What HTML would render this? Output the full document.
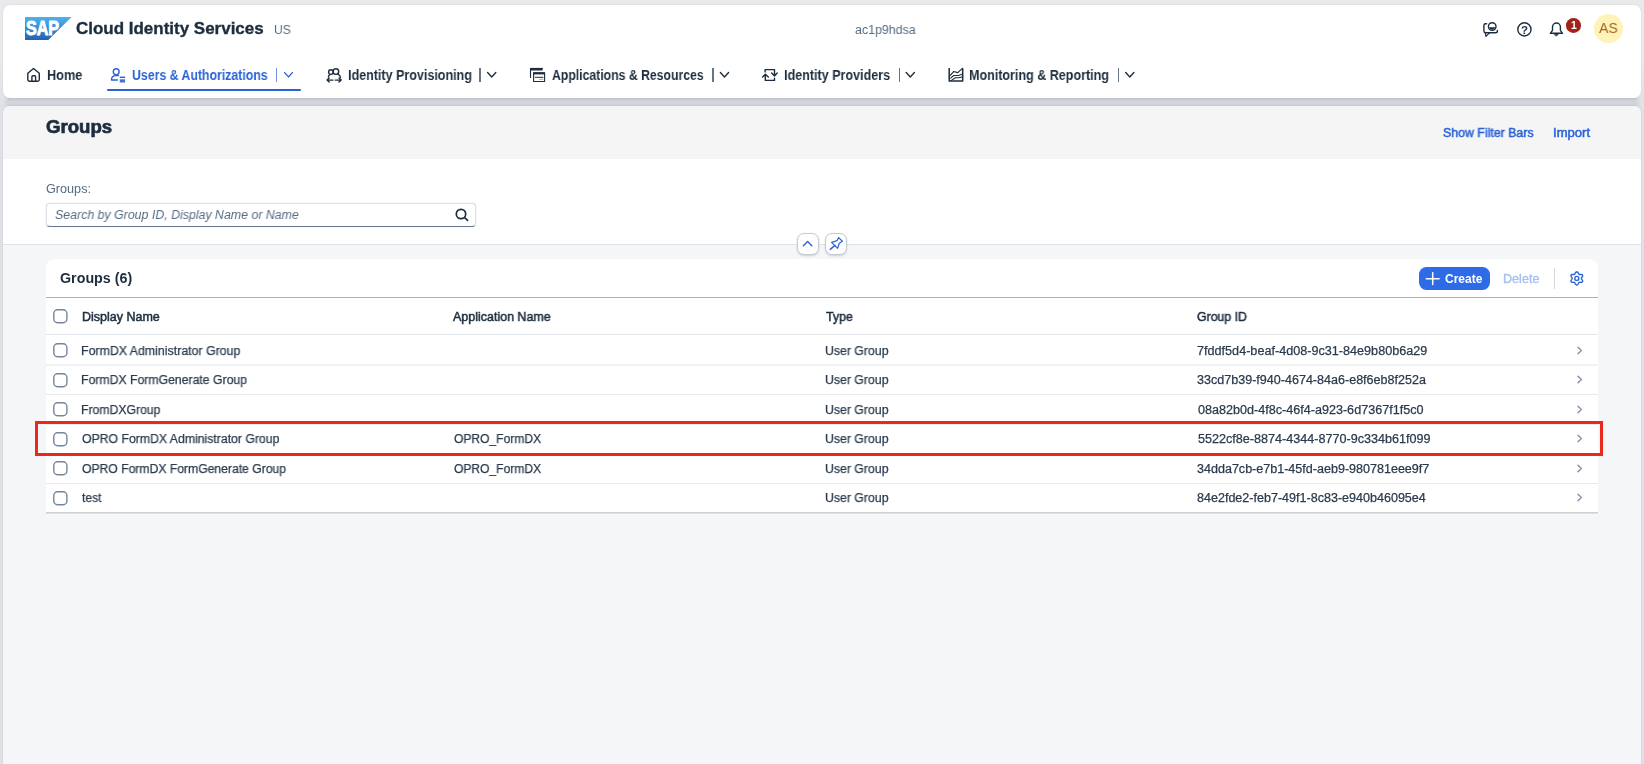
<!DOCTYPE html>
<html lang="en">
<head>
<meta charset="utf-8">
<title>Groups - Cloud Identity Services</title>
<style>
*{box-sizing:border-box;margin:0;padding:0}
html,body{width:1644px;height:764px;overflow:hidden}
body{background:linear-gradient(#e9eaec 0,#e9eaec 60px,#dfe1e5 110px,#dfe1e5 100%);font-family:"Liberation Sans",Arial,sans-serif;position:relative;color:#1d2d3e}
.t{position:absolute;white-space:nowrap;line-height:20px;height:20px;display:block;will-change:transform;transform-origin:0 50%}
svg{position:absolute;overflow:visible}
.ic{fill:none;stroke:#1d2d3e;stroke-width:1.4;stroke-linecap:round;stroke-linejoin:round}
.bl{stroke:#2b63d6}
/* shell */
#shell{position:absolute;left:3px;top:5px;width:1638px;height:93px;background:#fff;border-radius:7px;box-shadow:0 0 2px rgba(90,100,115,.2)}
#gap{position:absolute;left:8px;top:97px;width:1628px;height:10px;box-shadow:-3px 0 3px #d3d6db,3px 0 3px #d3d6db;background:linear-gradient(#c6cad1 0,#c8ccd3 25%,#d2d6db 45%,#d2d6db 70%,#cdd1d7 85%,#d6d9de 100%)}
#page{position:absolute;left:3px;top:106px;width:1638px;height:670px;background:#f5f6f7;border-radius:7px 7px 0 0;overflow:hidden;box-shadow:0 0 2px rgba(90,105,125,.18)}
#ptitle-bar{position:absolute;left:0;top:0;width:100%;height:53px;background:#f5f5f5}
#filter{position:absolute;left:0;top:53px;width:100%;height:86px;background:#fff;border-bottom:1px solid #dfe1e4}
#search{position:absolute;left:46px;top:203px;width:430px;height:24px;background:#fff;border:1px solid #dde2e8;border-bottom:1px solid #66788e;border-radius:4px;box-shadow:0 0 1px rgba(85,107,130,.35)}
.hbtn{position:absolute;top:233px;width:22px;height:22px;background:#fff;border:1px solid #c3cad3;border-radius:7px;box-shadow:0 1px 2px rgba(85,107,130,.25)}
#tbl{position:absolute;left:46px;top:259px;width:1552px;height:253px;background:#fff;border-radius:9px 9px 0 0}
#tbl .bline{position:absolute;left:0;top:253px;width:100%;height:3px;background:linear-gradient(#ccd1d8 0,#ccd1d8 33%,#dcdfe4 33%,#dcdfe4 66%,#f9fafa 66%)}
#tbl .tbline{position:absolute;left:0;top:38px;width:100%;height:1.4px;background:#a9b4c0}
#tbl .hline{position:absolute;left:0;top:75px;width:100%;height:1px;background:#e2e5e9}
.row{position:absolute;left:0;width:100%;height:29.5px}
.rl{position:absolute;left:0;width:100%;display:block}
.cb{left:7.1px;top:7px;width:16px;height:16px;fill:#fff;stroke:#75859b;stroke-width:1.4}
.chev{left:1531.3px;top:9.85px;width:6px;height:9px;fill:none;stroke:#7f8fa4;stroke-width:1.35;stroke-linecap:round;stroke-linejoin:round}
#create{position:absolute;left:1418.5px;top:266.8px;width:71px;height:23.5px;background:#2e6be6;border-radius:7.5px}
#tsep{position:absolute;left:1554.2px;top:268px;width:1px;height:21px;background:#d3d8de}
#redbox{position:absolute;left:35px;top:421px;width:1568px;height:35px;border:3.3px solid #e8291c}
#avatar{position:absolute;left:1594.4px;top:14.1px;width:28.6px;height:28.6px;border-radius:50%;background:#fff3ba}
#badge{position:absolute;left:1566.3px;top:18.3px;width:14.7px;height:14.7px;border-radius:50%;background:#a0221a}
#uline{position:absolute;left:107px;top:89px;width:193.7px;height:2px;background:#2b63d6;border-radius:1px}
.nsep{position:absolute;top:68px;width:1.6px;height:14px;background:#697585}
</style>
</head>
<body>
<div id="gap"></div>
<header id="shell"></header>
<!-- logo -->
<svg id="logo" style="left:24.7px;top:17px" width="46.6" height="23" viewBox="0 0 46.6 23">
<defs><linearGradient id="lg" x1="0" y1="0" x2="0" y2="1"><stop offset="0" stop-color="#4bb3ee"/><stop offset="0.35" stop-color="#3d97e0"/><stop offset="1" stop-color="#2460b4"/></linearGradient></defs>
<path d="M0 0H46.6L23.3 23H0Z" fill="url(#lg)"/>
<text x="0.9" y="18" font-family="Liberation Sans, Arial, sans-serif" font-weight="700" font-size="19.6" fill="#fff" stroke="#fff" stroke-width="0.9" textLength="33.2" lengthAdjust="spacingAndGlyphs">SAP</text>
</svg>
<span class="t" id="t-title" style="left:76.37px;top:18.00px;font-size:16.5px;font-weight:700;color:#1d2d3e;transform:scaleX(1.0286);-webkit-text-stroke:0.35px #1d2d3e">Cloud Identity Services</span>
<span class="t" id="t-us" style="left:274.08px;top:20.00px;font-size:12.5px;font-weight:400;color:#556b82;transform:scaleX(0.9672);">US</span>
<span class="t" id="t-tenant" style="left:855.23px;top:20.00px;font-size:12.5px;font-weight:400;color:#556b82;transform:scaleX(0.9910);">ac1p9hdsa</span>
<!-- shell right icons -->
<svg style="left:0;top:0" width="1644" height="60">
<g class="ic">
<path d="M1486.6 23.7H1485.6a1.7 1.7 0 0 0-1.7 1.7V31.1a1.7 1.7 0 0 0 1.7 1.7H1495.6a1.8 1.8 0 0 0 1.8-1.8V30.4"/>
<path d="M1485.2 33L1485.9 36.3L1489.6 32.9" stroke-width="1.2"/>
<circle cx="1492.2" cy="26.5" r="3.8"/>
<path d="M1489 27.2a3.3 3.3 0 0 0 6.4 0z" fill="#1d2d3e" stroke="none"/>
<circle cx="1524.4" cy="29.4" r="6.6"/>
<path d="M1550.3 33.3L1552.5 30.3V27a3.95 3.95 0 0 1 7.9 0V30.3L1562.5 33.3Z"/>
<path d="M1554.3 34.2h4.2l-2.1 1.8z" fill="#1d2d3e" stroke-width="0.6"/>
</g>
</svg>
<span class="t" id="t-q" style="left:1520.9px;top:20px;font-size:11.5px;font-weight:700;color:#1d2d3e">?</span>
<div id="badge"></div>
<div id="avatar"></div>
<span class="t" id="t-as" style="left:1598.96px;top:18.00px;font-size:14.5px;font-weight:400;color:#a5651a;transform:scaleX(0.9659);">AS</span>
<span class="t" id="t-badge" style="left:1570.76px;top:15.00px;font-size:10.5px;font-weight:700;color:#ffffff;transform:scaleX(1.0000);">1</span>
<!-- nav -->
<nav>
<svg style="left:0;top:60px" width="1200" height="36">
<g class="ic" transform="translate(0,-60)">
<!-- home -->
<path d="M27.8 73.3L33.55 68.5L39.3 73.3V79.6a1.7 1.7 0 0 1-1.7 1.7H29.5a1.7 1.7 0 0 1-1.7-1.7Z"/>
<path d="M31.9 81.3V76.8a1 1 0 0 1 1-1h1.7a1 1 0 0 1 1 1V81.3"/>
<!-- users -->
<g class="bl" transform="translate(0,0.5)">
<circle cx="116.2" cy="71.2" r="2.9"/>
<path d="M117.4 79.5H111.5C111.5 76.6 113.6 75.1 116 75.1H118.6"/>
<path d="M119.8 76.8h5.3" stroke-linecap="butt" stroke-width="1.5"/><path d="M119.8 80.4h5.3" stroke-linecap="butt" stroke-width="3.2" stroke="#3f6fdc"/>
</g>
<!-- identity provisioning -->
<g transform="translate(0,0.5)">
<circle cx="330.9" cy="71.6" r="2.3"/>
<circle cx="335.9" cy="71.1" r="2.8"/>
<path d="M328.4 76.6C328.4 75.4 329 74.6 329.8 74.3M338.2 73.9C339.6 74.5 340.4 75.6 340.4 77"/>
<path d="M327 79.6H333M335.2 79.6H341.2M329.2 77.6L327 79.6L329.2 81.6M339 77.6L341.2 79.6L339 81.6"/>
</g>
<!-- applications -->
<path d="M530.5 77.5V68.6H542.3" stroke-width="1.1"/>
<path d="M530.3 69.2H542.6" stroke-width="2.6" stroke-linecap="butt"/>
<rect x="533.6" y="72.9" width="11" height="8.6" stroke-width="1.1"/>
<path d="M533.3 73.4H545" stroke-width="2" stroke-linecap="butt"/>
<path d="M535.3 77.3H543" stroke-width="1"/>
<path d="M539.6 79.3H543" stroke-width="0.8" stroke="#8a97a6"/>
<!-- identity providers -->
<path d="M765.1 71.9V69.6H774.5V75.6M771.6 73.1L774.5 75.9L777.2 73.1"/>
<path d="M774.5 78.2V80.4H765.3V74.4M762.6 77L765.3 74.2L768.3 77"/>
<!-- monitoring -->
<path d="M949.2 68V81.1H962.7V68.3" stroke-width="1.5" stroke-linecap="butt"/>
<path d="M950.5 75.2L953.6 71.6C955 71.2 956.3 73 957.8 72.6L962.4 68.4" stroke-width="1.2"/>
<path d="M950.6 78.2L953.8 75.5H958.5L962 74.2M951 80.6L955.4 77.8H958.8L962 77" stroke-width="1.1"/>
<!-- chevrons -->
<path d="M284.6 72.6L288.5 76.9L292.4 72.6" class="bl"/>
<path d="M487.6 72.6L491.7 76.9L495.8 72.6"/>
<path d="M720.4 72.6L724.5 76.9L728.6 72.6"/>
<path d="M906.2 72.6L910.3 76.9L914.4 72.6"/>
<path d="M1125.7 72.6L1129.8 76.9L1133.9 72.6"/>
</g>
</svg>
<i class="nsep" style="left:275.8px;background:#6e8fe2"></i>
<i class="nsep" style="left:479.2px"></i>
<i class="nsep" style="left:712.1px"></i>
<i class="nsep" style="left:898.7px"></i>
<i class="nsep" style="left:1117.8px"></i>
<div id="uline"></div>
<span class="t" id="t-n1" style="left:47.07px;top:65.00px;font-size:14px;font-weight:700;color:#1d2d3e;transform:scaleX(0.9099);">Home</span>
<span class="t" id="t-n2" style="left:131.98px;top:65.00px;font-size:14px;font-weight:700;color:#2b63d6;transform:scaleX(0.8790);">Users &amp; Authorizations</span>
<span class="t" id="t-n3" style="left:347.99px;top:65.00px;font-size:14px;font-weight:700;color:#1d2d3e;transform:scaleX(0.8948);">Identity Provisioning</span>
<span class="t" id="t-n4" style="left:551.78px;top:65.00px;font-size:14px;font-weight:700;color:#1d2d3e;transform:scaleX(0.8737);">Applications &amp; Resources</span>
<span class="t" id="t-n5" style="left:783.98px;top:65.00px;font-size:14px;font-weight:700;color:#1d2d3e;transform:scaleX(0.8970);">Identity Providers</span>
<span class="t" id="t-n6" style="left:969.15px;top:65.00px;font-size:14px;font-weight:700;color:#1d2d3e;transform:scaleX(0.8951);">Monitoring &amp; Reporting</span>
</nav>
<main>
<div id="page"><div id="ptitle-bar"></div><div id="filter"></div></div>
<span class="t" id="t-ptitle" style="left:45.99px;top:117.00px;font-size:18.5px;font-weight:700;color:#1d2d3e;transform:scaleX(1.0063);-webkit-text-stroke:0.7px #1d2d3e">Groups</span>
<span class="t" id="t-sfb" style="left:1442.83px;top:123.00px;font-size:12.5px;font-weight:400;color:#2b63d6;transform:scaleX(0.9874);-webkit-text-stroke:0.5px #2b63d6">Show Filter Bars</span>
<span class="t" id="t-imp" style="left:1553.30px;top:123.00px;font-size:12.5px;font-weight:400;color:#2b63d6;transform:scaleX(1.0460);-webkit-text-stroke:0.5px #2b63d6">Import</span>
<span class="t" id="t-glabel" style="left:45.96px;top:179.00px;font-size:12.5px;font-weight:400;color:#556b82;transform:scaleX(1.0119);">Groups:</span>
<div id="search"></div>
<span class="t" id="t-ph" style="left:55.21px;top:205.00px;font-size:12.5px;font-weight:400;color:#556b82;transform:scaleX(0.9885);font-style:italic">Search by Group ID, Display Name or Name</span>
<svg style="left:450px;top:205px" width="24" height="20"><g class="ic" transform="translate(-450,-205)" stroke-width="1.7"><circle cx="461" cy="214" r="4.7" stroke-width="1.7"/><path d="M464.6 217.6L467.6 220.4" stroke-width="1.7"/></g></svg>
<div class="hbtn" style="left:796.6px"></div>
<div class="hbtn" style="left:825.4px"></div>
<svg style="left:796px;top:232px" width="52" height="24"><g class="ic bl" transform="translate(-796,-232)" stroke-width="1.4">
<path d="M803.4 245.7L807.6 241.6L811.8 245.7"/>
<path d="M830.2 249.4L835 245.4"/>
<path d="M831.6 242.3L837 240.7L838.6 237.6L842.4 241.3L839.3 243.2L837.6 248.3Z" stroke-width="1.2"/>
</g></svg>
<section id="tbl">
<div class="tbline"></div><div class="hline"></div><div class="bline"></div>
<svg class="cb" style="top:50.1px" width="16" height="16"><rect x="0.8" y="0.8" width="13.1" height="12.9" rx="3.7"/></svg>
<div class="row" style="top:77.10px"><svg class="cb" width="16" height="16"><rect x="0.8" y="0.8" width="13.1" height="12.9" rx="3.7"/></svg><svg class="chev" viewBox="0 0 6 9"><path d="M1 1.3 L4.4 4.5 L1 7.7"/></svg></div>
<div class="row" style="top:106.60px"><svg class="cb" width="16" height="16"><rect x="0.8" y="0.8" width="13.1" height="12.9" rx="3.7"/></svg><svg class="chev" viewBox="0 0 6 9"><path d="M1 1.3 L4.4 4.5 L1 7.7"/></svg></div>
<div class="row" style="top:136.10px"><svg class="cb" width="16" height="16"><rect x="0.8" y="0.8" width="13.1" height="12.9" rx="3.7"/></svg><svg class="chev" viewBox="0 0 6 9"><path d="M1 1.3 L4.4 4.5 L1 7.7"/></svg></div>
<div class="row" style="top:165.60px"><svg class="cb" width="16" height="16"><rect x="0.8" y="0.8" width="13.1" height="12.9" rx="3.7"/></svg><svg class="chev" viewBox="0 0 6 9"><path d="M1 1.3 L4.4 4.5 L1 7.7"/></svg></div>
<div class="row" style="top:195.10px"><svg class="cb" width="16" height="16"><rect x="0.8" y="0.8" width="13.1" height="12.9" rx="3.7"/></svg><svg class="chev" viewBox="0 0 6 9"><path d="M1 1.3 L4.4 4.5 L1 7.7"/></svg></div>
<div class="row" style="top:224.60px"><svg class="cb" width="16" height="16"><rect x="0.8" y="0.8" width="13.1" height="12.9" rx="3.7"/></svg><svg class="chev" viewBox="0 0 6 9"><path d="M1 1.3 L4.4 4.5 L1 7.7"/></svg></div>
<i class="rl" style="top:105px;height:2px;background:#f1f2f3"></i>
<i class="rl" style="top:135px;height:1px;background:#e9eaec"></i>
<i class="rl" style="top:165px;height:1px;background:#e9eaec"></i>
<i class="rl" style="top:194px;height:1px;background:#e9eaec"></i>
<i class="rl" style="top:224px;height:1px;background:#e9eaec"></i>
</section>
<span class="t" id="t-tt" style="left:59.91px;top:268.00px;font-size:14px;font-weight:700;color:#1d2d3e;transform:scaleX(1.0197);">Groups (6)</span>
<div id="create"></div>
<svg style="left:1424px;top:270px" width="18" height="18"><path d="M1432.7 272.8V284.6M1426.3 278.7H1439.1" transform="translate(-1424,-270)" fill="none" stroke="#fff" stroke-width="1.5" stroke-linecap="round"/></svg>
<span class="t" id="t-create" style="left:1445.32px;top:269.00px;font-size:12px;font-weight:700;color:#ffffff;transform:scaleX(0.9879);">Create</span>
<span class="t" id="t-delete" style="left:1503.29px;top:269.00px;font-size:12.5px;font-weight:400;color:#a5c0f2;transform:scaleX(1.0091);-webkit-text-stroke:0.35px #a5c0f2">Delete</span>
<div id="tsep"></div>
<svg style="left:1566px;top:268px" width="22" height="22"><g class="ic bl" transform="translate(-1566,-268)" stroke-width="1.35"><path d="M1581.40 278.40L1581.52 277.99L1581.82 277.51L1582.21 276.95L1582.53 276.31L1582.66 275.67L1582.52 275.10L1582.10 274.69L1581.47 274.48L1580.76 274.44L1580.08 274.49L1579.52 274.52L1579.10 274.42L1578.80 274.11L1578.54 273.61L1578.25 272.99L1577.86 272.39L1577.36 271.96L1576.80 271.80L1576.24 271.96L1575.74 272.39L1575.35 272.99L1575.06 273.61L1574.80 274.11L1574.50 274.42L1574.08 274.52L1573.52 274.49L1572.84 274.44L1572.13 274.48L1571.50 274.69L1571.08 275.10L1570.94 275.67L1571.07 276.31L1571.39 276.95L1571.78 277.51L1572.08 277.99L1572.20 278.40L1572.08 278.81L1571.78 279.29L1571.39 279.85L1571.07 280.49L1570.94 281.13L1571.08 281.70L1571.50 282.11L1572.13 282.32L1572.84 282.36L1573.52 282.31L1574.08 282.28L1574.50 282.38L1574.80 282.69L1575.06 283.19L1575.35 283.81L1575.74 284.41L1576.24 284.84L1576.80 285.00L1577.36 284.84L1577.86 284.41L1578.25 283.81L1578.54 283.19L1578.80 282.69L1579.10 282.38L1579.52 282.28L1580.08 282.31L1580.76 282.36L1581.47 282.32L1582.10 282.11L1582.52 281.70L1582.66 281.13L1582.53 280.49L1582.21 279.85L1581.82 279.29L1581.52 278.81Z"/><circle cx="1576.8" cy="278.4" r="2"/></g></svg>
<span class="t" id="t-h1" style="left:81.72px;top:307.00px;font-size:12.5px;font-weight:400;color:#1d2d3e;transform:scaleX(0.9946);-webkit-text-stroke:0.5px #1d2d3e">Display Name</span>
<span class="t" id="t-h2" style="left:453.44px;top:307.00px;font-size:12.5px;font-weight:400;color:#1d2d3e;transform:scaleX(0.9971);-webkit-text-stroke:0.5px #1d2d3e">Application Name</span>
<span class="t" id="t-h3" style="left:825.61px;top:307.00px;font-size:12.5px;font-weight:400;color:#1d2d3e;transform:scaleX(0.9835);-webkit-text-stroke:0.5px #1d2d3e">Type</span>
<span class="t" id="t-h4" style="left:1197.40px;top:307.00px;font-size:12.5px;font-weight:400;color:#1d2d3e;transform:scaleX(0.9837);-webkit-text-stroke:0.5px #1d2d3e">Group ID</span>
<span class="t" id="t-r0a" style="left:80.96px;top:341.00px;font-size:12.5px;font-weight:400;color:#2a3a4c;transform:scaleX(0.9885);-webkit-text-stroke:0.25px #2a3a4c">FormDX Administrator Group</span>
<span class="t" id="t-r0c" style="left:824.81px;top:341.00px;font-size:12.5px;font-weight:400;color:#2a3a4c;transform:scaleX(0.9824);-webkit-text-stroke:0.25px #2a3a4c">User Group</span>
<span class="t" id="t-r0d" style="left:1197.41px;top:341.00px;font-size:12.5px;font-weight:400;color:#2a3a4c;transform:scaleX(1.0102);-webkit-text-stroke:0.25px #2a3a4c">7fddf5d4-beaf-4d08-9c31-84e9b80b6a29</span>
<span class="t" id="t-r1a" style="left:80.96px;top:370.00px;font-size:12.5px;font-weight:400;color:#2a3a4c;transform:scaleX(0.9794);-webkit-text-stroke:0.25px #2a3a4c">FormDX FormGenerate Group</span>
<span class="t" id="t-r1c" style="left:824.81px;top:370.00px;font-size:12.5px;font-weight:400;color:#2a3a4c;transform:scaleX(0.9824);-webkit-text-stroke:0.25px #2a3a4c">User Group</span>
<span class="t" id="t-r1d" style="left:1197.44px;top:370.00px;font-size:12.5px;font-weight:400;color:#2a3a4c;transform:scaleX(1.0042);-webkit-text-stroke:0.25px #2a3a4c">33cd7b39-f940-4674-84a6-e8f6eb8f252a</span>
<span class="t" id="t-r2a" style="left:80.96px;top:400.00px;font-size:12.5px;font-weight:400;color:#2a3a4c;transform:scaleX(0.9771);-webkit-text-stroke:0.25px #2a3a4c">FromDXGroup</span>
<span class="t" id="t-r2c" style="left:824.81px;top:400.00px;font-size:12.5px;font-weight:400;color:#2a3a4c;transform:scaleX(0.9824);-webkit-text-stroke:0.25px #2a3a4c">User Group</span>
<span class="t" id="t-r2d" style="left:1197.79px;top:400.00px;font-size:12.5px;font-weight:400;color:#2a3a4c;transform:scaleX(1.0074);-webkit-text-stroke:0.25px #2a3a4c">08a82b0d-4f8c-46f4-a923-6d7367f1f5c0</span>
<span class="t" id="t-r3a" style="left:81.55px;top:429.00px;font-size:12.5px;font-weight:400;color:#2a3a4c;transform:scaleX(0.9799);-webkit-text-stroke:0.25px #2a3a4c">OPRO FormDX Administrator Group</span>
<span class="t" id="t-r3b" style="left:453.50px;top:429.00px;font-size:12.5px;font-weight:400;color:#2a3a4c;transform:scaleX(0.9641);-webkit-text-stroke:0.25px #2a3a4c">OPRO_FormDX</span>
<span class="t" id="t-r3c" style="left:824.81px;top:429.00px;font-size:12.5px;font-weight:400;color:#2a3a4c;transform:scaleX(0.9824);-webkit-text-stroke:0.25px #2a3a4c">User Group</span>
<span class="t" id="t-r3d" style="left:1197.53px;top:429.00px;font-size:12.5px;font-weight:400;color:#2a3a4c;transform:scaleX(1.0078);-webkit-text-stroke:0.25px #2a3a4c">5522cf8e-8874-4344-8770-9c334b61f099</span>
<span class="t" id="t-r4a" style="left:81.55px;top:459.00px;font-size:12.5px;font-weight:400;color:#2a3a4c;transform:scaleX(0.9727);-webkit-text-stroke:0.25px #2a3a4c">OPRO FormDX FormGenerate Group</span>
<span class="t" id="t-r4b" style="left:453.50px;top:459.00px;font-size:12.5px;font-weight:400;color:#2a3a4c;transform:scaleX(0.9641);-webkit-text-stroke:0.25px #2a3a4c">OPRO_FormDX</span>
<span class="t" id="t-r4c" style="left:824.81px;top:459.00px;font-size:12.5px;font-weight:400;color:#2a3a4c;transform:scaleX(0.9824);-webkit-text-stroke:0.25px #2a3a4c">User Group</span>
<span class="t" id="t-r4d" style="left:1197.44px;top:459.00px;font-size:12.5px;font-weight:400;color:#2a3a4c;transform:scaleX(1.0036);-webkit-text-stroke:0.25px #2a3a4c">34dda7cb-e7b1-45fd-aeb9-980781eee9f7</span>
<span class="t" id="t-r5a" style="left:81.96px;top:488.00px;font-size:12.5px;font-weight:400;color:#2a3a4c;transform:scaleX(0.9628);-webkit-text-stroke:0.25px #2a3a4c">test</span>
<span class="t" id="t-r5c" style="left:824.81px;top:488.00px;font-size:12.5px;font-weight:400;color:#2a3a4c;transform:scaleX(0.9824);-webkit-text-stroke:0.25px #2a3a4c">User Group</span>
<span class="t" id="t-r5d" style="left:1196.82px;top:488.00px;font-size:12.5px;font-weight:400;color:#2a3a4c;transform:scaleX(1.0036);-webkit-text-stroke:0.25px #2a3a4c">84e2fde2-feb7-49f1-8c83-e940b46095e4</span>
<div id="redbox"></div>
</main>
</body>
</html>
